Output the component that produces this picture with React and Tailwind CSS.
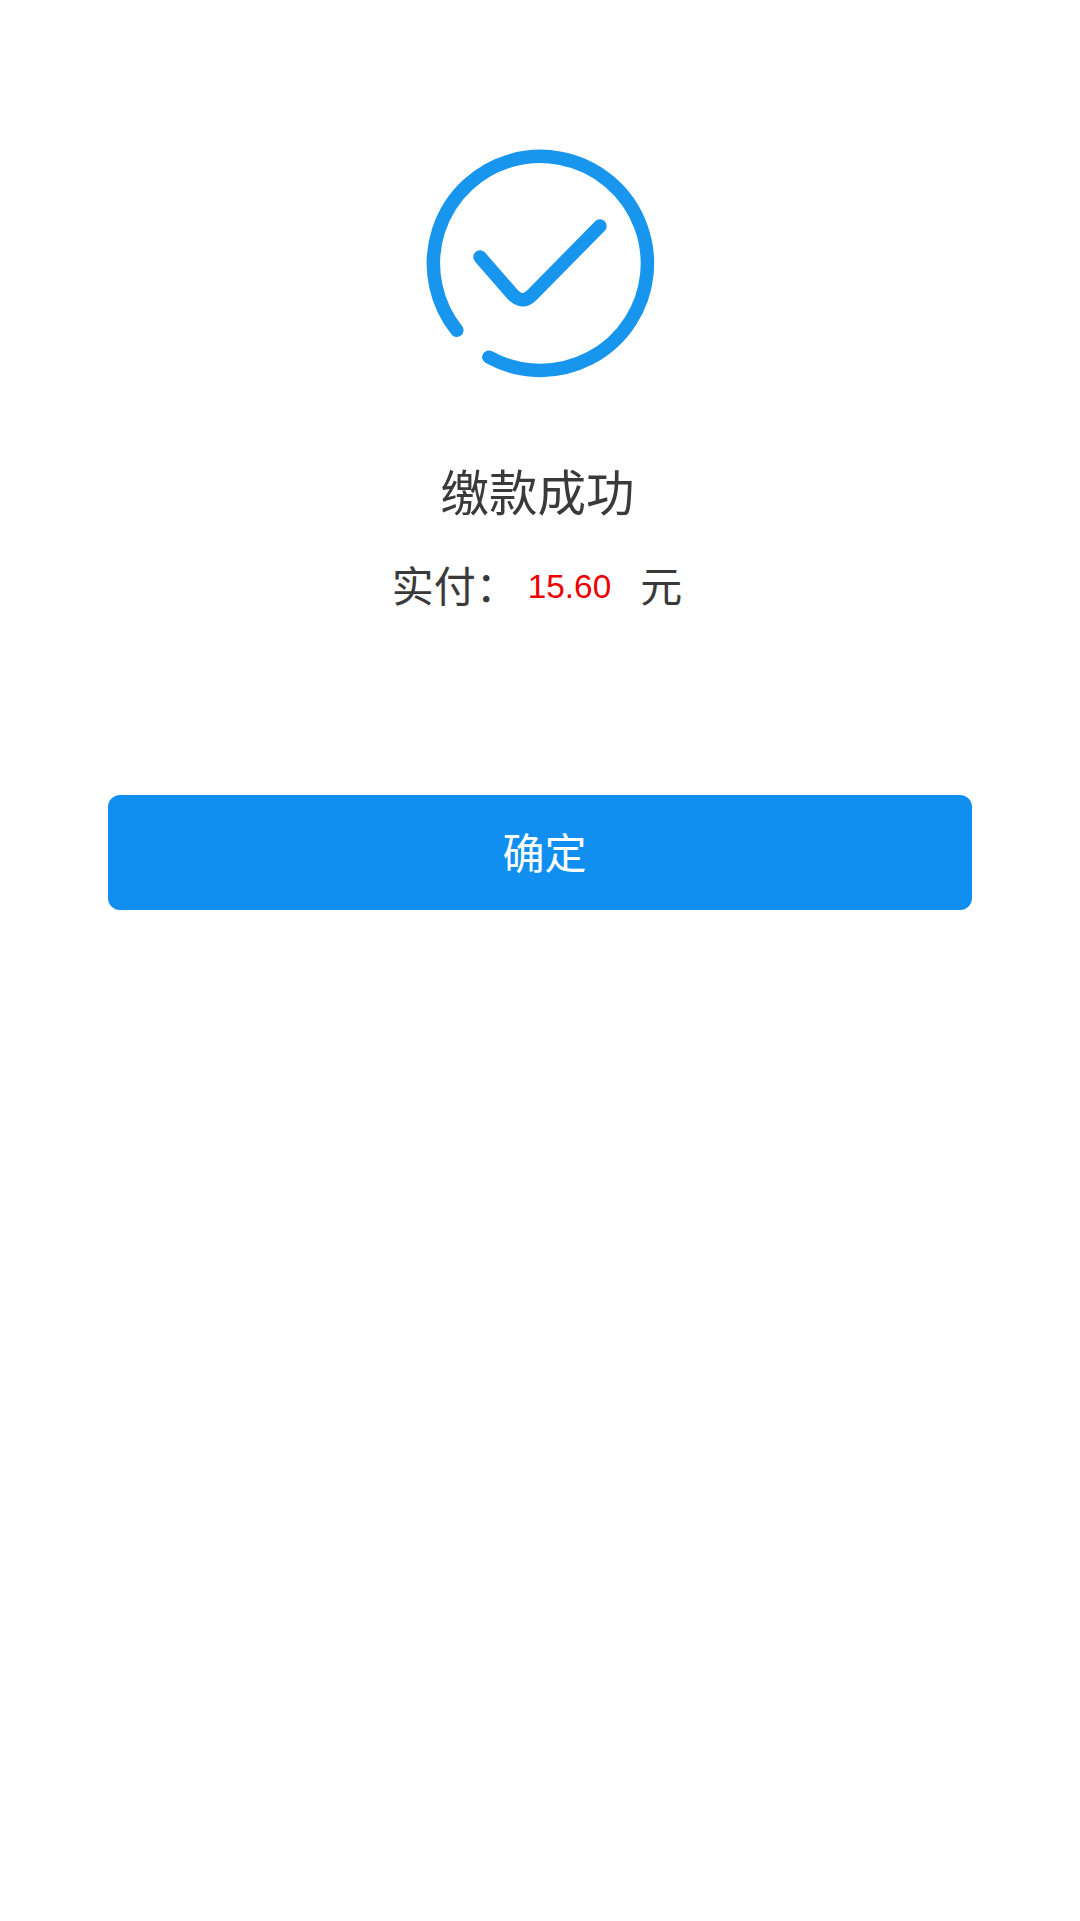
// App.jsx
// Payment success page

import React from 'react';

const cjk = 'font-["Liberation_Sans","Noto_Sans_CJK_SC",sans-serif]';

const SuccessIcon = () => (
  <svg className="overflow-visible block" width="228" height="228" viewBox="0 0 228 228" fill="none" stroke="#1896ee" strokeWidth="13.5" strokeLinecap="round" strokeLinejoin="round">
    <path d="M30.8 180.2 A107 107 0 1 1 62.9 207.2" />
    <path d="M54 107 L86 143.7 Q96 155.2 106 145 L174 76" />
  </svg>
);

const App = () => {
  return (
    <div className={`w-full min-h-[1921px] bg-white flex flex-col items-center ${cjk}`}>
      <div className="mt-[150px]">
        <SuccessIcon />
      </div>

      <h1 className="mt-[87px] ml-[-5px] text-[48.5px] leading-[58px] font-normal text-[#3a3a3a]">缴款成功</h1>

      <div className="mt-[39px] ml-[-6px] flex items-center h-[50px] text-[42px] text-[#3a3a3a]">
        <span className="w-[136px]">实付：</span>
        <span className="text-[33.4px] text-[#ee0000]">15.60</span>
        <span className="ml-[29px]">元</span>
      </div>

      <button className="mt-[183px] w-[864px] h-[115px] pt-[4px] rounded-xl bg-[#118ff0] text-white text-[42px]">
        <span className="ml-[9px]">确定</span>
      </button>
    </div>
  );
};

export default App;
